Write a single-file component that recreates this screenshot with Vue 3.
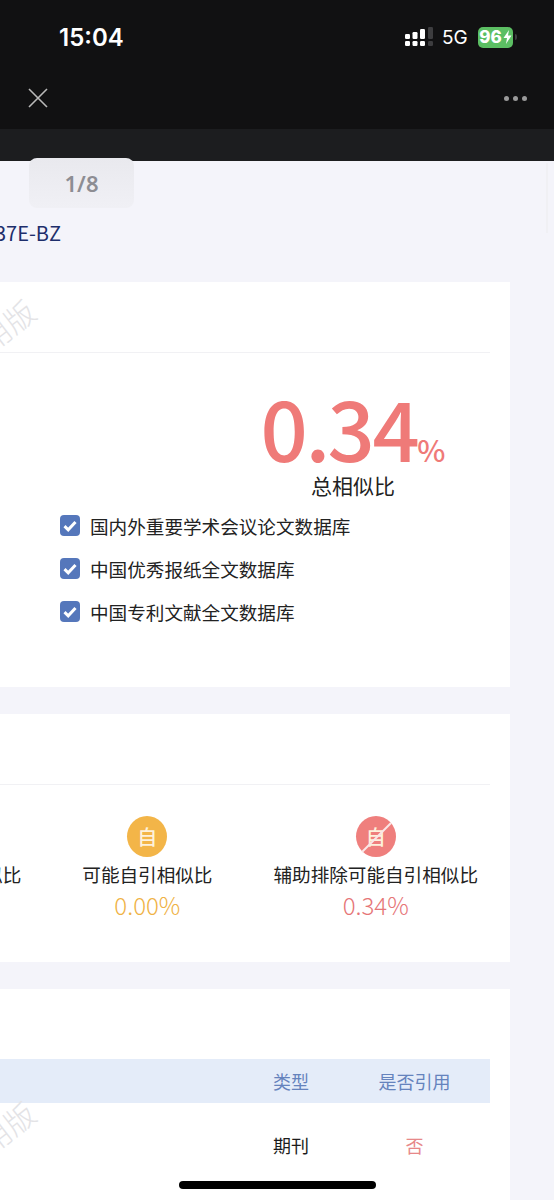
<script setup>
const databases = ['国内外重要学术会议论文数据库', '中国优秀报纸全文数据库', '中国专利文献全文数据库']
</script>
<template>
  <div class="screen">
    <header class="top">
      <div class="status">
        <span class="time">15:04</span>
        <div class="status-right">
          <svg class="signal" width="28" height="20" viewBox="0 0 28 20">
            <rect x="0" y="7" width="5" height="5" rx="1.2" fill="#fff" />
            <rect x="7.5" y="5" width="5" height="7" rx="1.2" fill="#fff" />
            <rect x="15" y="2" width="5" height="10" rx="1.2" fill="#fff" />
            <rect x="23" y="0" width="5" height="12" rx="1.2" fill="#3d3d3f" />
            <rect x="0" y="14" width="5" height="5" rx="1.2" fill="#fff" />
            <rect x="7.5" y="14" width="5" height="5" rx="1.2" fill="#fff" />
            <rect x="15" y="14" width="5" height="5" rx="1.2" fill="#fff" />
            <rect x="23" y="14" width="5" height="5" rx="1.2" fill="#3d3d3f" />
          </svg>
          <span class="net">5G</span>
          <div class="battery">
            <span>96</span>
            <svg width="9" height="14" viewBox="0 0 9 14"><path d="M6 0 L0.5 8 H4 L3 14 L8.5 5.5 H5 Z" fill="#fff" /></svg>
          </div>
          <i class="nub"></i>
        </div>
      </div>
      <div class="nav">
        <svg width="20" height="20" viewBox="0 0 20 20">
          <path d="M1 1 L19 19 M19 1 L1 19" stroke="#b9b9b9" stroke-width="1.6" fill="none" />
        </svg>
        <div class="more"><i></i><i></i><i></i></div>
      </div>
    </header>
    <div class="strip"></div>

    <main class="page">
      <div class="pager">1/8</div>
      <div class="scroll-hint"></div>
      <div class="report-no"><span>报告编号 37E-BZ</span></div>

      <section class="card summary">
        <div class="watermark">试用版</div>
        <div class="card-head"></div>
        <div class="total">
          <div class="total-num">0.34<small>%</small></div>
          <div class="total-label">总相似比</div>
        </div>
        <ul class="db-list">
          <li v-for="item in databases" :key="item">
            <span class="check">
              <svg width="14" height="12" viewBox="0 0 14 12"><path d="M1.5 6.2 L5.2 9.8 L12.5 2" stroke="#fff" stroke-width="3" fill="none" /></svg>
            </span>
            {{ item }}
          </li>
        </ul>
      </section>

      <section class="card stats">
        <div class="card-head"></div>
        <div class="stat-row">
          <div class="stat">
            <div class="stat-icon blue">他</div>
            <div class="stat-label">可能他引相似比</div>
            <div class="stat-value">0.00%</div>
          </div>
          <div class="stat">
            <div class="stat-icon yellow">自</div>
            <div class="stat-label">可能自引相似比</div>
            <div class="stat-value yellow-text">0.00%</div>
          </div>
          <div class="stat">
            <div class="stat-icon red">
              自
              <svg class="slash" width="40" height="41" viewBox="0 0 40 41"><path d="M6 36 L35 7" stroke="#fbe6e6" stroke-width="2" /></svg>
            </div>
            <div class="stat-label">辅助排除可能自引相似比</div>
            <div class="stat-value red-text">0.34%</div>
          </div>
        </div>
      </section>

      <section class="card sources">
        <div class="watermark lower">试用版</div>
        <div class="table-row table-head">
          <span></span>
          <span>类型</span>
          <span>是否引用</span>
        </div>
        <div class="table-row table-body">
          <span></span>
          <span>期刊</span>
          <span class="no">否</span>
        </div>
      </section>
    </main>
    <div class="home-bar"></div>
  </div>
</template>
<style>
html,
body {
  margin: 0;
  background: #f4f4fa;
}
</style>
<style scoped>
.screen {
  position: relative;
  width: 554px;
  height: 1200px;
  overflow: hidden;
  background: #f4f4fa;
  font-family: "Noto Sans CJK SC", "Noto Sans", sans-serif;
  color: #222;
}
.top {
  height: 129px;
  background: #111112;
}
.status {
  height: 74px;
  display: flex;
  align-items: center;
  justify-content: space-between;
  padding-left: 59px;
  padding-right: 37px;
}
.time {
  font-family: Inter, sans-serif;
  font-size: 24px;
  font-weight: 600;
  color: #fff;
}
.status-right {
  display: flex;
  align-items: center;
}
.signal {
  margin-right: 9px;
}
.net {
  width: 27px;
  margin-right: 9px;
  font-family: Inter, sans-serif;
  font-size: 19px;
  color: #fff;
}
.battery {
  width: 35px;
  height: 21px;
  border-radius: 5px;
  background: #5cbf63;
  display: flex;
  align-items: center;
  justify-content: center;
  gap: 1px;
  color: #fff;
  font-family: Inter, sans-serif;
  font-size: 17px;
  font-weight: 800;
}
.nub {
  width: 2px;
  height: 6px;
  margin-left: 2px;
  border-radius: 0 2px 2px 0;
  background: #3d3d3f;
}
.nav {
  height: 48px;
  display: flex;
  align-items: center;
  justify-content: space-between;
  padding: 0 27px 0 28px;
}
.more {
  display: flex;
  gap: 4px;
}
.more i {
  width: 5px;
  height: 5px;
  border-radius: 50%;
  background: #9a9a9a;
}
.strip {
  height: 32px;
  background: #1c1d1f;
}
.page {
  position: relative;
  height: 1039px;
}
.pager {
  position: absolute;
  left: 29px;
  top: -3px;
  width: 105px;
  height: 50px;
  border-radius: 8px;
  background: linear-gradient(#e9e9ee, #f0f0f5);
  color: #8d8d93;
  font-family: "Noto Sans", sans-serif;
  font-size: 22px;
  font-weight: 600;
  text-align: center;
  line-height: 50px;
}
.scroll-hint {
  position: absolute;
  right: 6px;
  top: 2px;
  width: 2px;
  height: 70px;
  background: #f0f0f4;
}
.report-no {
  height: 121px;
  box-sizing: border-box;
  padding-top: 57px;
  width: 61px;
  display: flex;
  justify-content: flex-end;
  white-space: nowrap;
  overflow: hidden;
  font-size: 20px;
  line-height: 30px;
  color: #1d2e6b;
}
.report-no span {
  flex-shrink: 0;
}
.card {
  position: relative;
  width: 510px;
  background: #fff;
  overflow: hidden;
}
.card-head {
  width: 490px;
  height: 70px;
  border-bottom: 1px solid #f1f1f4;
}
.watermark {
  position: absolute;
  left: -50px;
  top: 32px;
  font-size: 30px;
  line-height: 40px;
  font-weight: 300;
  color: #e3e3e6;
  transform: rotate(-38deg);
}
.watermark.lower {
  top: 127px;
}
.summary {
  height: 405px;
  margin-bottom: 27px;
}
.total {
  width: 180px;
  margin-left: 263px;
  padding-top: 29px;
  display: flex;
  flex-direction: column;
  align-items: center;
}
.total-num {
  height: 88px;
  font-size: 83px;
  font-weight: 500;
  line-height: 88px;
  letter-spacing: -2.5px;
  color: #ef7a78;
  white-space: nowrap;
}
.total-num small {
  font-size: 30px;
  letter-spacing: 0;
}
.total-label {
  font-size: 21px;
  line-height: 30px;
}
.db-list {
  list-style: none;
  margin: 0;
  padding: 4px 0 0 60px;
}
.db-list li {
  height: 43px;
  display: flex;
  align-items: center;
  gap: 10px;
  font-size: 18.6px;
}
.check {
  width: 20px;
  height: 21px;
  border-radius: 4px;
  background: #5577bb;
  display: flex;
  align-items: center;
  justify-content: center;
}
.stats {
  height: 248px;
  margin-bottom: 27px;
}
.stat-row {
  width: 478px;
  padding-top: 31px;
  display: flex;
  justify-content: flex-end;
  gap: 61px;
  overflow: hidden;
}
.stat {
  flex-shrink: 0;
  display: flex;
  flex-direction: column;
  align-items: center;
}
.stat-icon {
  position: relative;
  width: 40px;
  height: 41px;
  border-radius: 50%;
  display: flex;
  align-items: center;
  justify-content: center;
  color: #fdf1dc;
  font-size: 20px;
  font-weight: 500;
}
.stat-icon.blue {
  background: #5577bb;
}
.stat-icon.yellow {
  background: #f3b548;
}
.stat-icon.red {
  background: #ef7f7d;
}
.slash {
  position: absolute;
  left: 0;
  top: 0;
}
.stat-label {
  margin-top: 2px;
  font-size: 18.6px;
  line-height: 30px;
  white-space: nowrap;
}
.stat-value {
  margin-top: 0;
  font-size: 24px;
  line-height: 32px;
  font-weight: 300;
}
.yellow-text {
  color: #efb245;
}
.red-text {
  color: #e67577;
}
.sources {
  height: 211px;
  padding-top: 70px;
  box-sizing: border-box;
}
.table-row {
  width: 490px;
  display: grid;
  grid-template-columns: 1fr 96px 151px;
  align-items: center;
  text-align: center;
  font-size: 18px;
}
.table-head {
  height: 44px;
  background: #e4ecf9;
  color: #6583bd;
}
.table-body {
  height: 84px;
  color: #1c1c1c;
}
.no {
  color: #e78889;
}
.home-bar {
  position: absolute;
  left: 179px;
  top: 1181px;
  width: 197px;
  height: 8px;
  border-radius: 4px;
  background: #000;
}
</style>
